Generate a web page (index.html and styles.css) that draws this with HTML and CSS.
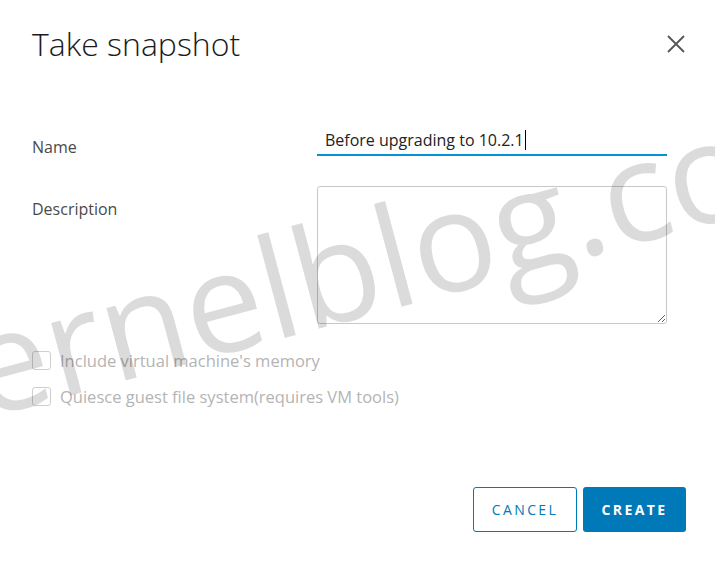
FILE: index.html
```html
<!DOCTYPE html>
<html lang="en">
<head>
    <meta charset="UTF-8">
    <meta name="viewport" content="width=device-width, initial-scale=1.0">
    <title>Take snapshot</title>
    <link rel="stylesheet" href="styles.css">
</head>
<body>

    <div class="modal">
        <div class="modal-header">
            <h3 class="modal-title">Take snapshot</h3>
            <button class="close-btn" aria-label="Close">
                <svg width="20" height="20" viewBox="0 0 20 20">
                    <path d="M2 2 L18 18 M18 2 L2 18" stroke="#565656" stroke-width="1.8" fill="none"/>
                </svg>
            </button>
        </div>

        <div class="modal-body">
            <div class="form-row">
                <label class="form-label">Name</label>
                <div class="name-field">
                    <span class="name-value">Before upgrading to 10.2.1</span><span class="caret"></span>
                </div>
            </div>
            <div class="form-row">
                <label class="form-label" for="snap-desc">Description</label>
                <textarea id="snap-desc" class="desc-field"></textarea>
            </div>

            <div class="checks">
                <label class="check"><span class="box"></span>Include virtual machine's memory</label>
                <label class="check"><span class="box"></span>Quiesce guest file system(requires VM tools)</label>
            </div>
        </div>

        <div class="modal-footer">
            <button class="btn btn-outline">CANCEL</button>
            <button class="btn btn-primary">CREATE</button>
        </div>

        <div class="watermark">kernelblog.com</div>
    </div>

</body>
</html>
```

FILE: styles.css
```css
body {
    margin: 0;
    background-color: #fff;
    font-family: 'Open Sans', sans-serif;
    color: #454545;
}
.modal {
    position: relative;
    width: 715px;
    height: 561px;
    padding: 0 29px 0 32px;
    box-sizing: border-box;
    overflow: hidden;
}
.modal-header {
    display: flex;
    justify-content: space-between;
    align-items: flex-start;
    padding-top: 24px;
}
.modal-title {
    margin: 0;
    font-size: 32px;
    font-weight: 300;
    color: #1b1b1b;
    line-height: 40px;
}
.close-btn {
    border: none;
    background: none;
    padding: 0;
    margin-top: 10px;
    width: 20px;
    height: 20px;
    cursor: pointer;
}
.modal-body {
    padding-top: 61px;
}
.form-row {
    display: grid;
    grid-template-columns: 285px 350px;
}
.form-label {
    font-size: 16px;
    color: #4a4a4a;
    padding-top: 11px;
}
.name-field {
    height: 29px;
    border-bottom: 2px solid #0094d2;
    padding-left: 8px;
    font-size: 16px;
    color: #222;
    display: flex;
    align-items: center;
    margin-bottom: 30px;
}
.caret {
    display: inline-block;
    width: 1px;
    height: 20px;
    margin-left: 1px;
    background: #000;
}
.desc-field {
    height: 138px;
    border: 1px solid #c8c8c8;
    border-radius: 3px;
    box-sizing: border-box;
    background: transparent;
}
.form-row:nth-child(2) .form-label {
    padding-top: 12px;
}
.checks {
    margin-top: 27px;
    display: flex;
    flex-direction: column;
    gap: 17px;
}
.check {
    display: flex;
    align-items: center;
    font-size: 16.5px;
    color: #b4b4b4;
    line-height: 19px;
}
.box {
    width: 17px;
    height: 17px;
    border: 1px solid #cfcfcf;
    border-radius: 3px;
    margin-right: 9px;
}
.modal-footer {
    position: absolute;
    right: 29px;
    top: 487px;
    display: flex;
    gap: 6px;
}
.btn {
    height: 45px;
    padding: 0;
    border-radius: 3px;
    font-family: 'Open Sans', sans-serif;
    font-size: 14px;
    letter-spacing: 2.4px;
    cursor: pointer;
}
.btn-outline {
    width: 104px;
    border: 1px solid #0079b8;
    background: #fff;
    color: #0079b8;
}
.btn-primary {
    width: 103px;
    border: none;
    background: #0079b8;
    color: #fff;
    font-weight: 700;
}
.watermark {
    position: absolute;
    left: -120px;
    top: 318px;
    font-family: 'Open Sans', sans-serif;
    font-size: 140px;
    line-height: 1;
    color: rgba(0, 0, 0, 0.14);
    white-space: nowrap;
    transform: rotate(-15deg);
    transform-origin: 0 0;
    pointer-events: none;
}
```
